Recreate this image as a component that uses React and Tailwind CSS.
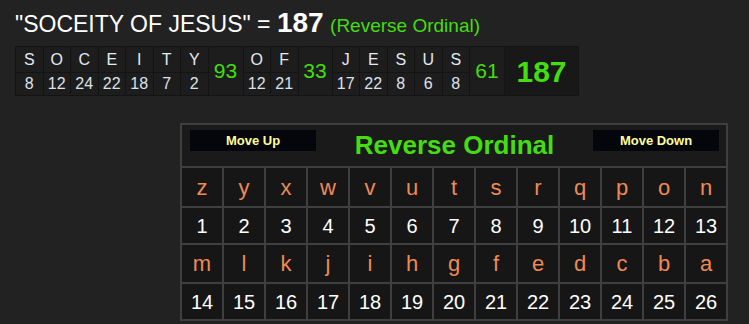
const phrase = [
  { word: [["S", 8], ["O", 12], ["C", 24], ["E", 22], ["I", 18], ["T", 7], ["Y", 2]], sum: 93, w: "w-[34px]" },
  { word: [["O", 12], ["F", 21]], sum: 33, w: "w-[33px]" },
  { word: [["J", 17], ["E", 22], ["S", 8], ["U", 6], ["S", 8]], sum: 61, w: "w-[34px]" },
];

const rowA = "zyxwvutsrqpon".split("");
const rowB = "mlkjihgfedcba".split("");

function LetterCells({ letters, start }) {
  return (
    <>
      {letters.map((l) => (
        <div key={l} className="bg-[#161616] flex items-center justify-center text-[22px] text-[#ee8a55]">
          {l}
        </div>
      ))}
      {letters.map((l, i) => (
        <div key={l + "n"} className="bg-[#161616] flex items-center justify-center text-[20px] text-white">
          {start + i}
        </div>
      ))}
    </>
  );
}

export default function App() {
  return (
    <div className="min-h-screen bg-[#222222] font-['Liberation_Sans',Arial,sans-serif] overflow-hidden">
      {/* titel */}
      <div className="h-[46px] pl-[15px] pt-[6px] text-[23px] leading-[34px] text-white whitespace-nowrap">
        "SOCEITY OF JESUS" = <span className="text-[28px] font-bold">187</span>{" "}
        <span className="text-[19px] text-[#44dd11]">(Reverse Ordinal)</span>
      </div>

      {/* aufschlüsselung */}
      <div className="ml-[15px] inline-flex gap-px bg-[#141414] p-px">
        {phrase.map((p, i) => (
          <div key={i} className="flex gap-px">
            {p.word.map(([ch, n], j) => (
              <div key={j} className="flex flex-col gap-px w-[26.5px]">
                <div className="h-[25px] bg-[#1d1d1d] flex items-center justify-center text-[16px] text-[#e2eaf2]">{ch}</div>
                <div className="h-[22px] bg-[#1d1d1d] flex items-center justify-center text-[16px] text-[#dde2ea]">{n}</div>
              </div>
            ))}
            <div className={`${p.w} bg-[#1d1d1d] flex items-center justify-center text-[21px] text-[#44dd11]`}>{p.sum}</div>
          </div>
        ))}
        <div className="w-[73px] bg-[#181818] flex items-center justify-center text-[30px] font-bold text-[#44dd11]">187</div>
      </div>

      {/* tabelle */}
      <div className="ml-[180px] mt-[27px] w-[548px] grid grid-cols-13 grid-rows-[41px_38px_35px_37px_35px] gap-[2px] bg-[#3f3f3f] p-[2px]">
        <div className="col-span-13 bg-[#1a1a1a] flex items-start justify-between pt-[5px] pl-[8px] pr-[7px]">
          <button className="w-[126px] h-[21px] bg-[#05050c] text-[13px] font-bold text-[#ffff99]">Move Up</button>
          <span className="text-[26px] leading-[30px] font-bold text-[#44dd11]">Reverse Ordinal</span>
          <button className="w-[126px] h-[21px] bg-[#05050c] text-[13px] font-bold text-[#ffff99]">Move Down</button>
        </div>
        <LetterCells letters={rowA} start={1} />
        <LetterCells letters={rowB} start={14} />
      </div>
    </div>
  );
}
